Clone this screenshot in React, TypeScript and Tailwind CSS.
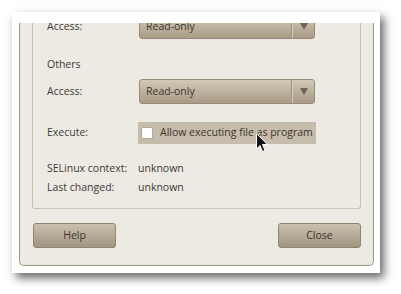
import React from 'react';

const font = { fontFamily: '"Open Sans", "DejaVu Sans", sans-serif' };

const Combo: React.FC<{ value: string }> = ({ value }) => (
  <div className="flex h-[25px] w-[176px] items-stretch rounded-[3px] border border-[#978b78] bg-gradient-to-b from-[#d3c9b8] to-[#a99b86] text-[10.5px] text-[#3b352d]">
    <div className="flex flex-1 items-center pl-[6px]">{value}</div>
    <div className="w-px bg-[#a0947f]" />
    <div className="w-px bg-[#d6ccbc]" />
    <div className="flex w-[21px] items-center justify-center">
      <svg width="8" height="7" viewBox="0 0 8 7">
        <path d="M0 0 H8 L4 7 Z" fill="#6d665c" />
      </svg>
    </div>
  </div>
);

const Button: React.FC<{ label: string }> = ({ label }) => (
  <div className="flex h-[25px] w-[83px] items-center justify-center rounded-[3px] border border-[#8f8471] bg-gradient-to-b from-[#cbc0ae] to-[#a19580] text-[10.5px] text-[#3b352d]">
    {label}
  </div>
);

const App: React.FC = () => {
  return (
    <div className="relative h-[294px] w-[401px] overflow-hidden bg-white pl-[12px] pt-[12px]" style={font}>
      <div className="h-[261px] w-[368px] bg-white pl-[7px] pr-[6px] pt-[11px] shadow-[4px_5px_9px_rgba(0,0,0,0.6)]">
        {/* dialog body, top scrolled off */}
        <div className="h-[243px] overflow-hidden rounded-b-[5px] border-x border-b border-[#9c9485] bg-[#edeae3] text-[10.5px] text-[#3c3a36]">
          <div className="mx-[12px] rounded-b-[3px] border-x border-b border-[#c9c1b2]">
            <div className="-mt-[9px] flex flex-col pb-[12px] pl-[14px]">
              <div className="flex h-[25px] items-center">
                <div className="w-[92px]">Access:</div>
                <Combo value="Read-only" />
              </div>
              <div className="mt-[18px] flex h-[16px] items-center">Others</div>
              <div className="mt-[6px] flex h-[25px] items-center">
                <div className="w-[92px]">Access:</div>
                <Combo value="Read-only" />
              </div>
              <div className="mt-[18px] flex h-[22px] items-center">
                <div className="w-[91px]">Execute:</div>
                <div className="flex h-[22px] w-[178px] items-center whitespace-nowrap bg-[#c6bcab] pl-[3px]">
                  <div className="h-[12px] w-[12px] shrink-0 rounded-[2px] border border-[#b3a892] bg-white" />
                  <span className="ml-[7px] text-[#3b352d]">Allow executing file as program</span>
                </div>
              </div>
              <div className="mt-[17px] flex h-[16px] items-center">
                <div className="w-[91px]">SELinux context:</div>
                <div>unknown</div>
              </div>
              <div className="mt-[3px] flex h-[16px] items-center">
                <div className="w-[91px]">Last changed:</div>
                <div>unknown</div>
              </div>
            </div>
          </div>
          <div className="mt-[14px] flex justify-between pl-[13px] pr-[12px]">
            <Button label="Help" />
            <Button label="Close" />
          </div>
        </div>
      </div>
      {/* mouse pointer */}
      <svg className="absolute left-[256px] top-[133px]" width="13" height="20" viewBox="0 0 13 20">
        <path d="M0.5 0.5 V16 L4 12.5 L6.5 18.5 L9 17.5 L6.5 11.5 H11.5 Z" fill="#111" stroke="#fff" strokeWidth="1" />
      </svg>
    </div>
  );
};

export default App;
